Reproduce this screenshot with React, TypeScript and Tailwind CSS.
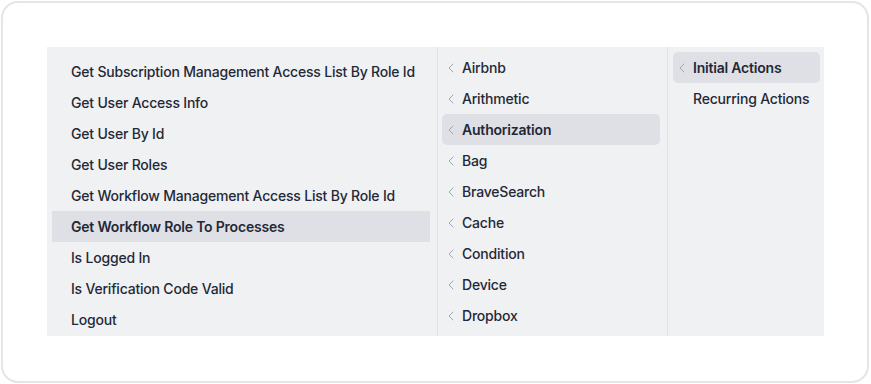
import { ChevronLeft } from 'lucide-react';

const actions = [
  'Get Subscription Management Access List By Role Id',
  'Get User Access Info',
  'Get User By Id',
  'Get User Roles',
  'Get Workflow Management Access List By Role Id',
  'Get Workflow Role To Processes',
  'Is Logged In',
  'Is Verification Code Valid',
  'Logout',
];

const integrations = [
  'Airbnb',
  'Arithmetic',
  'Authorization',
  'Bag',
  'BraveSearch',
  'Cache',
  'Condition',
  'Device',
  'Dropbox',
];

const triggers = ['Initial Actions', 'Recurring Actions'];

function SubItem({ label, active }: { label: string; active?: boolean }) {
  return (
    <div
      className={`flex items-center h-[31px] rounded-[5px] ${
        active ? 'bg-[#dfe0e5] font-semibold' : 'font-medium'
      }`}
    >
      <span className="w-5 flex justify-start pl-[1px]">
        <ChevronLeft className="w-4 h-4 text-[#a1a6b0]" strokeWidth={1.5} />
      </span>
      <span>{label}</span>
    </div>
  );
}

export default function App() {
  return (
    <div className="w-[871px] h-[384px] bg-white p-px [font-family:Inter,sans-serif]">
      <div className="h-[382px] w-[868px] rounded-[17px] border-2 border-[#e3e5e9] bg-white pt-[44px] pl-[44px]">
        <div className="flex w-[777px] h-[289px] bg-[#f0f1f3] text-[14px] tracking-[-0.2px] text-[#1f2937] overflow-hidden">
          {/* Actions list */}
          <div className="w-[391px] border-r border-[#e0e2e6] pl-[5px] pr-[7px] pt-[9px]">
            {actions.map((a) => (
              <div
                key={a}
                className={`flex items-center h-[31px] pl-[19px] ${
                  a === 'Get Workflow Role To Processes'
                    ? 'bg-[#dfe0e5] font-semibold'
                    : 'font-medium'
                }`}
              >
                {a}
              </div>
            ))}
          </div>

          {/* Integrations */}
          <div className="w-[230px] border-r border-[#e0e2e6] pl-[4px] pr-[7px] pt-[5px]">
            {integrations.map((i) => (
              <SubItem key={i} label={i} active={i === 'Authorization'} />
            ))}
          </div>

          {/* Triggers */}
          <div className="flex-1 pl-[5px] pr-[4px] pt-[5px]">
            {triggers.map((t, idx) =>
              idx === 0 ? (
                <SubItem key={t} label={t} active />
              ) : (
                <div key={t} className="flex items-center h-[31px] pl-5 font-medium">
                  {t}
                </div>
              )
            )}
          </div>
        </div>
      </div>
    </div>
  );
}
